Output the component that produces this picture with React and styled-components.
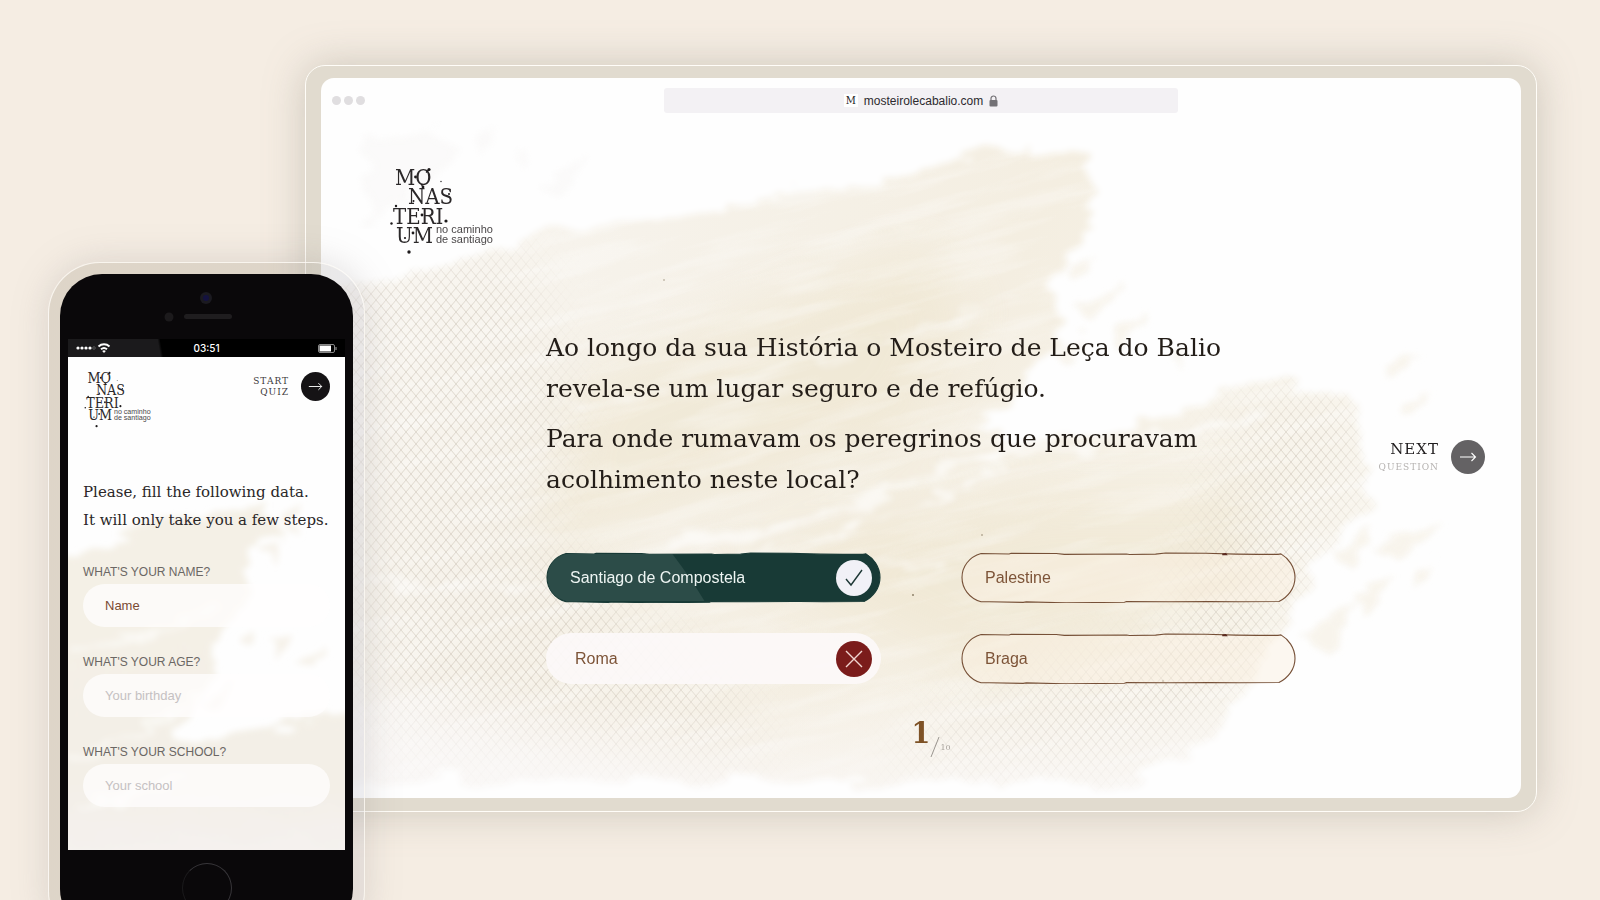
import React from "react";
import styled, { createGlobalStyle, css } from "styled-components";

const slab = `"DejaVu Serif", serif`;
const slabNarrow = `"DejaVu Serif Condensed", "DejaVu Serif", serif`;
const sans = `"Liberation Sans", Arial, sans-serif`;

const answers = [
  { label: "Santiago de Compostela", state: "right" },
  { label: "Palestine", state: "idle" },
  { label: "Roma", state: "wrong" },
  { label: "Braga", state: "idle" },
];

const fields = [
  { id: "name", label: "WHAT'S YOUR NAME?", value: "Name" },
  { id: "age", label: "WHAT'S YOUR AGE?", placeholder: "Your birthday" },
  { id: "school", label: "WHAT'S YOUR SCHOOL?", placeholder: "Your school" },
];

const Logo = ({ width }) => (
  <LogoSvg viewBox="0 0 110 90" $width={width} role="img" aria-label="Monasterium">
    <g fontFamily="DejaVu Serif Condensed, DejaVu Serif, serif" fontSize="22" fill="#2b2829">
      <text x="7" y="20">MO</text>
      <text x="20" y="39">NAS</text>
      <text x="5" y="59">TERI</text>
      <text x="8" y="78">UM</text>
    </g>
    <g fontFamily="Liberation Sans, sans-serif" fontSize="11" fill="#4a4748">
      <text x="48" y="68">no caminho</text>
      <text x="48" y="78">de santiago</text>
    </g>
    <g fill="#1d1a1b">
      <circle cx="41" cy="4.500" r="1.6" />
      <path d="M41 4.500l-3 3M33 19l2 3" stroke="#1d1a1b" strokeWidth="1.200" />
      <circle cx="27.500" cy="12" r="1.4" />
      <circle cx="53" cy="16.5" r="0.7" />
      <circle cx="35" cy="22" r="1.4" />
      <circle cx="25.5" cy="36" r="1" />
      <circle cx="61" cy="29" r="1" />
      <circle cx="8" cy="41" r="1.2" />
      <circle cx="3.5" cy="58.5" r="1.2" />
      <circle cx="34" cy="50" r="1.4" />
      <circle cx="58" cy="56" r="1.6" />
      <circle cx="25" cy="68" r="1.4" />
      <circle cx="17" cy="73" r="1.1" />
      <circle cx="21" cy="87" r="1.7" />
    </g>
  </LogoSvg>
);

const Arrow = ({ size }) => (
  <svg width={size} height={size} viewBox="0 0 18 18" fill="none" stroke="#fff" strokeWidth="1.1">
    <path d="M1 9h15.500M12.500 5l4 4-4 4" />
  </svg>
);

/* Brush stroke with the net texture behind the quiz */
const DesktopPaint = () => (
  <Paint viewBox="0 0 1200 720" preserveAspectRatio="xMidYMid slice" aria-hidden="true">
    <defs>
      <pattern id="net" width="10" height="12" patternUnits="userSpaceOnUse">
        <path d="M0 0l10 12M10 0L0 12" stroke="#bfb6a6" strokeWidth="0.9" />
      </pattern>
      <filter id="rough" x="-5%" y="-5%" width="110%" height="110%">
        <feTurbulence type="fractalNoise" baseFrequency="0.02 0.05" numOctaves="4" seed="4" />
        <feDisplacementMap in="SourceGraphic" scale="34" xChannelSelector="R" yChannelSelector="G" />
        <feGaussianBlur stdDeviation="3" />
      </filter>
      <filter id="grain" x="0" y="0" width="100%" height="100%">
        <feTurbulence type="fractalNoise" baseFrequency="0.008 0.06" numOctaves="4" seed="9" />
        <feColorMatrix values="0 0 0 0 1  0 0 0 0 1  0 0 0 0 1  0 3 0 0 -1.3" />
      </filter>
      <filter id="soft" x="-20%" y="-20%" width="140%" height="140%">
        <feGaussianBlur stdDeviation="26" />
      </filter>
      <linearGradient id="wash" x1="0" y1="0" x2="1" y2="0.3">
        <stop offset="0" stopColor="#fbf9f6" />
        <stop offset="0.3" stopColor="#f6f2ea" />
        <stop offset="0.6" stopColor="#f4eee1" />
        <stop offset="1" stopColor="#f9f6ef" />
      </linearGradient>
      <linearGradient id="floor" x1="0" y1="0" x2="0" y2="1">
        <stop offset="0" stopColor="#fbf9f9" stopOpacity="0" />
        <stop offset="1" stopColor="#fbf9f9" stopOpacity="0.7" />
      </linearGradient>
      <mask id="brush">
        <path
          filter="url(#rough)"
          fill="#fff"
          d="M20 215L218 160 322 146 425 124 537 104 617 84 696 70 772 70 764 110 778 146 730 193 742 250 700 310 650 356 700 366 824 346 943 300 1031 316 1050 424 996 478 980 527 920 615 890 664 800 704H0V215z"
        />
      </mask>
      <mask id="netArea">
        <g filter="url(#soft)" fill="#fff">
          <path d="M30 190L200 180 240 330 210 460 420 620 440 700H60z" />
          <path d="M920 320h120v100l-60 80-80 130-100 70H560l60-60 240-80z" />
        </g>
      </mask>
    </defs>
    <g mask="url(#brush)">
      <rect width="1200" height="720" fill="url(#wash)" />
      <g filter="url(#soft)" fill="#ece2c8" opacity="0.45">
        <path d="M260 300L600 170l50 60-60 120-380 130z" />
        <path d="M420 480l300-70 220 0-20 130-260 60z" />
      </g>
      <g transform="rotate(-14 600 360)">
        <rect x="-100" y="-150" width="1400" height="1000" filter="url(#grain)" opacity="0.28" />
      </g>
      <g mask="url(#netArea)">
        <rect width="1200" height="720" fill="url(#net)" opacity="0.5" />
      </g>
      <g filter="url(#rough)" fill="none" stroke="#fff" strokeLinecap="round">
        <path d="M330 470q180-20 370-110" strokeWidth="8" opacity="0.6" />
        <path d="M360 490q170-24 330-104" strokeWidth="3" opacity="0.8" />
        <path d="M240 330q220-30 460-110" strokeWidth="4" opacity="0.4" />
        <path d="M30 500q300 30 620-20" strokeWidth="5" opacity="0.5" />
        <path d="M660 375q170-4 280-40" strokeWidth="6" opacity="0.6" />
      </g>
      <path d="M0 600L300 680 560 740H0z" fill="#fbf9f9" filter="url(#soft)" opacity="0.6" />
      <rect y="600" width="1200" height="120" fill="url(#floor)" />
    </g>
    <g filter="url(#rough)" fill="#f6f1e6" opacity="0.75">
      <path d="M740 190l34-12-20 26zM750 226l50-24-26 40zM790 250l40-14-34 34zM730 270l34-12-18 30zM850 280l24-8-18 20z" />
      <path d="M1060 290l40-14-30 28zM1080 326l30-10-20 22zM1010 470l44-22-20 38zM1060 470l60-26-40 40zM1030 520l40-24-20 40zM1090 500l24-14-14 26zM980 560l50-36-20 50z" />
    </g>
    <g filter="url(#rough)" fill="#f8f6f5" opacity="0.45">
      <path d="M40 60l70-14 30 40-90 60zM150 60l24-14-16 34zM190 80l26-10-20 26zM224 104l40-24-24 36z" />
    </g>
    <g fill="#8d8069">
      <circle cx="592" cy="517" r="1" />
      <circle cx="661" cy="457" r="0.8" />
      <circle cx="343" cy="202" r="0.7" />
      <circle cx="842" cy="603" r="1.2" opacity="0.5" />
    </g>
  </Paint>
);

const PhonePaint = () => (
  <Paint viewBox="0 0 277 493" preserveAspectRatio="xMidYMid slice" aria-hidden="true">
    <defs>
      <linearGradient id="fade" x1="0" y1="0" x2="0" y2="1">
        <stop offset="0.3" stopColor="#f4f0e6" />
        <stop offset="0.75" stopColor="#f3efe7" />
        <stop offset="1" stopColor="#f5f2f1" />
      </linearGradient>
    </defs>
    <g filter="url(#rough)">
      <path
        fill="url(#fade)"
        d="M-20 205L60 178 110 156 190 150 210 170 180 200 186 226 160 262 144 300 150 320 120 352 106 386 170 380 290 344V520H-20z"
      />
      <path fill="#f6f2ea" d="M196 190l24-10-14 24zM168 280l20-8-10 22zM200 286l24-14-12 30zM232 300l28-8-14 20zM132 348l34-22-18 30zM216 166l16-8-6 18z" />
      <path d="M0 400q60-10 130-60M0 290q80-6 150-40M10 450q60-10 100-30" stroke="#fff" strokeWidth="5" fill="none" opacity="0.6" />
    </g>
  </Paint>
);

const PillOutline = ({ filled }) => (
  <Outline viewBox="0 0 334 52" preserveAspectRatio="none" aria-hidden="true">
    <path
      d="M20 1.500l28 0.500 2-0.800 45 0.400 8 0.800 62-0.400 3 0.600 26-0.400 10-1.200 40 0.300 30 0.900 22 0.200 20 0 3-0.500C326 6 333 15 333 26S326 46 317 50.500l-40 0.300-30-0.400-40 0.400-42-0.400-2 0.800-58 0.600-40-0.900-3 0.500-34-0.600H20C8 47 1 37 1 26S8 5 20 1.500z"
      fill={filled ? "#183a36" : "#fbf0e0"}
      fillOpacity={filled ? 1 : 0.45}
      stroke={filled ? "#183a36" : "#765037"}
      strokeWidth="1.1"
      vectorEffect="non-scaling-stroke"
    />
    {filled ? (
      <path d="M20 2H126q18 24 32 48H20C8 47 1.500 37 1.500 26S8 5 20 2z" fill="#2c4c48" />
    ) : (
      <path d="M261 2l3-0.500 1 1.300-4 0z" fill="#5b2a20" stroke="#5b2a20" />
    )}
  </Outline>
);

const Answer = ({ label, state }) => (
  <AnswerButton type="button" $state={state}>
    {state !== "wrong" && <PillOutline filled={state === "right"} />}
    <span>{label}</span>
    {state !== "idle" && (
      <Mark $state={state}>
        {state === "right" ? (
          <svg width="20" height="20" viewBox="0 0 20 20" fill="none" stroke="#1d3735" strokeWidth="1.400">
            <path d="M2 11l5 6L18 2" />
          </svg>
        ) : (
          <svg width="20" height="20" viewBox="0 0 20 20" fill="none" stroke="#f0d5d0" strokeWidth="1.400">
            <path d="M2 2l16 16M18 2L2 18" />
          </svg>
        )}
      </Mark>
    )}
  </AnswerButton>
);

const Browser = () => (
  <BrowserFrame>
    <BrowserWindow>
      <DesktopPaint />
      <Chrome>
        <Dots>
          <Dot />
          <Dot />
          <Dot />
        </Dots>
        <Address>
          <Favicon>M</Favicon>
          mosteirolecabalio.com
          <svg width="9" height="12" viewBox="0 0 9 12">
            <path d="M2 5V3.500a2.500 2.500 0 0 1 5 0V5" fill="none" stroke="#737175" strokeWidth="1.200" />
            <rect x="0.500" y="5" width="8" height="6.500" rx="1" fill="#737175" />
          </svg>
        </Address>
      </Chrome>
      <Quiz>
        <QuizLogo>
          <Logo width={110} />
        </QuizLogo>
        <Question>
          <p>Ao longo da sua História o Mosteiro de Leça do Balio revela-se um lugar seguro e de refúgio.</p>
          <p>Para onde rumavam os peregrinos que procuravam acolhimento neste local?</p>
        </Question>
        <Answers>
          {answers.map((a) => (
            <Answer key={a.label} {...a} />
          ))}
        </Answers>
        <Counter>
          <Current>1</Current>
          <Total>
            <svg width="10" height="22" viewBox="0 0 10 22">
              <path d="M9 1L1 21" stroke="#8f8a84" strokeWidth="0.900" />
            </svg>
            10
          </Total>
        </Counter>
        <Next type="button">
          <NextText>
            <NextMain>NEXT</NextMain>
            <NextSub>QUESTION</NextSub>
          </NextText>
          <Round $size={34} $color="#646264">
            <Arrow size={18} />
          </Round>
        </Next>
      </Quiz>
    </BrowserWindow>
  </BrowserFrame>
);

const Phone = () => (
  <PhoneFrame>
    <PhoneBody>
      <Earpiece viewBox="0 0 277 65" aria-hidden="true">
        <circle cx="138" cy="24" r="6" fill="#1b1a20" />
        <circle cx="138" cy="24" r="3" fill="#14123f" />
        <circle cx="101" cy="43" r="4.500" fill="#1c1a1c" />
        <rect x="116" y="40" width="48" height="5" rx="2.500" fill="#1f1d1f" />
      </Earpiece>
      <StatusBar>
        <svg width="36" height="12" viewBox="0 0 36 12" fill="#fff">
          <circle cx="2" cy="6" r="1.600" />
          <circle cx="6" cy="6" r="1.600" />
          <circle cx="10" cy="6" r="1.600" />
          <circle cx="14" cy="6" r="1.600" />
          <circle cx="18" cy="6" r="1.300" fill="none" stroke="#777" strokeWidth="0.600" />
          <g fill="none" stroke="#fff" strokeWidth="1.900">
            <path d="M22.500 4.500a8 8 0 0 1 11 0" />
            <path d="M25 7.200a4.600 4.600 0 0 1 6 0" />
          </g>
          <path d="M28 11l-1.800-2a2.600 2.600 0 0 1 3.600 0z" />
        </svg>
        <span>03:51</span>
        <Battery viewBox="0 0 19 9">
          <rect x="0.500" y="0.500" width="16" height="8" rx="1.500" fill="none" stroke="#aaa" strokeWidth="0.800" />
          <rect x="1.500" y="1.500" width="11.500" height="6" fill="#fff" />
          <path d="M18 3v3" stroke="#aaa" />
        </Battery>
      </StatusBar>
      <Screen>
        <PhonePaint />
        <PhoneHeader>
          <Logo width={71} />
          <Start type="button">
            <StartText>
              START
              <br />
              QUIZ
            </StartText>
            <Round $size={29} $color="#151315">
              <Arrow size={15} />
            </Round>
          </Start>
        </PhoneHeader>
        <Intro>
          Please, fill the following data.
          <br />
          It will only take you a few steps.
        </Intro>
        {fields.map((f) => (
          <Field key={f.id}>
            <label htmlFor={f.id}>{f.label}</label>
            <input id={f.id} type="text" defaultValue={f.value} placeholder={f.placeholder} />
          </Field>
        ))}
      </Screen>
      <HomeButton type="button" aria-label="Home" />
    </PhoneBody>
  </PhoneFrame>
);

export default function App() {
  return (
    <Stage>
      <GlobalStyle />
      <Browser />
      <Phone />
    </Stage>
  );
}

const GlobalStyle = createGlobalStyle`
  *, *::before, *::after {
    box-sizing: border-box;
  }
  body {
    margin: 0;
    background: #f5ede3;
    font-family: ${sans};
  }
  button {
    padding: 0;
    border: 0;
    background: none;
    font: inherit;
    cursor: pointer;
  }
`;

const Stage = styled.main`
  position: relative;
  display: flex;
  min-height: 100vh;
  padding: 65px 63px 88px 305px;
  overflow: hidden;
`;

const Paint = styled.svg`
  position: absolute;
  inset: 0;
  width: 100%;
  height: 100%;
  z-index: -1;
`;

const LogoSvg = styled.svg`
  display: block;
  width: ${({ $width }) => $width}px;
`;

// Browser
const BrowserFrame = styled.section`
  display: flex;
  flex: 1;
  padding: 12px 15px 13px;
  border: 1px solid #fffdf8;
  border-radius: 20px;
  background: #e1dbcf;
  box-shadow: 0 0 40px rgba(140, 134, 120, 0.38);
`;

const BrowserWindow = styled.div`
  position: relative;
  isolation: isolate;
  display: flex;
  flex: 1;
  flex-direction: column;
  border-radius: 13px;
  background: #fefefe;
  overflow: hidden;
`;

const Chrome = styled.header`
  display: grid;
  grid-template-columns: 2fr 3fr 2fr;
  align-items: center;
  height: 45px;
`;

const Dots = styled.div`
  display: flex;
  gap: 3px;
  padding-left: 11px;
`;

const Dot = styled.span`
  width: 9px;
  height: 9px;
  border-radius: 50%;
  background: #e0dee0;
`;

const Address = styled.div`
  display: flex;
  justify-content: center;
  align-items: center;
  gap: 6px;
  height: 25px;
  border-radius: 3px;
  background: #f3f1f4;
  color: #2c2a2e;
  font-size: 12px;
`;

const Favicon = styled.span`
  padding: 0 2px;
  background: #fff;
  color: #222;
  font-family: ${slabNarrow};
  font-size: 11px;
`;

const Quiz = styled.div`
  display: grid;
  flex: 1;
  grid-template-columns: 1fr minmax(0, 750px) 1fr;
  grid-template-rows: auto auto auto 1fr;
  padding: 42px 0 36px;
`;

const QuizLogo = styled.div`
  grid-column: 1;
  grid-row: 1;
  padding-left: 67px;
`;

const Question = styled.div`
  grid-column: 2;
  grid-row: 2;
  padding-top: 72px;
  color: #231d18;
  font-family: ${slab};
  font-size: 25px;
  line-height: 41px;

  p {
    margin: 0 0 9px;
  }
`;

const Answers = styled.div`
  display: grid;
  grid-column: 2;
  grid-row: 3;
  grid-template-columns: 1fr 1fr;
  gap: 30px 80px;
  margin-top: 43px;
`;

const AnswerButton = styled.button`
  position: relative;
  isolation: isolate;
  display: flex;
  justify-content: space-between;
  align-items: center;
  height: 51px;
  padding: 0 9px 0 24px;
  color: #7d5438;
  font-size: 16px;

  ${({ $state }) =>
    $state === "right" &&
    css`
      color: #eef5f3;
    `}

  ${({ $state }) =>
    $state === "wrong" &&
    css`
      padding-left: 29px;
      border-radius: 26px;
      background: rgba(252, 249, 248, 0.92);
    `}
`;

const Outline = styled.svg`
  position: absolute;
  inset: 0;
  width: 100%;
  height: 100%;
  z-index: -1;
`;

const Mark = styled.span`
  display: flex;
  justify-content: center;
  align-items: center;
  width: 36px;
  height: 36px;
  border-radius: 50%;
  background: ${({ $state }) => ($state === "right" ? "#f1f1f7" : "#7b1c1b")};
`;

const Counter = styled.div`
  display: grid;
  grid-column: 2;
  grid-row: 4;
  grid-template-columns: 1fr auto 1fr;
  align-items: start;
  padding-top: 34px;
`;

const Current = styled.strong`
  grid-column: 2;
  color: #7e5226;
  font-family: ${slabNarrow};
  font-size: 30px;
  line-height: 30px;
`;

const Total = styled.span`
  display: flex;
  align-items: center;
  padding-top: 18px;
  color: #a9a49e;
  font-family: ${slab};
  font-size: 8px;
`;

const Next = styled.button`
  display: flex;
  grid-column: 3;
  grid-row: 1 / -1;
  align-self: center;
  justify-self: end;
  align-items: center;
  gap: 12px;
  margin: 0 36px 14px 0;
`;

const NextText = styled.span`
  display: flex;
  flex-direction: column;
  align-items: flex-end;
  font-family: ${slab};
`;

const NextMain = styled.span`
  color: #1f1c1d;
  font-size: 15px;
  line-height: 20px;
  letter-spacing: 1px;
`;

const NextSub = styled.span`
  color: #b5b2b0;
  font-family: ${slabNarrow};
  font-size: 10px;
  line-height: 16px;
  letter-spacing: 1px;
`;

const Round = styled.span`
  display: flex;
  justify-content: center;
  align-items: center;
  width: ${({ $size }) => $size}px;
  height: ${({ $size }) => $size}px;
  border-radius: 50%;
  background: ${({ $color }) => $color};
`;

// Phone, lies over the browser's lower left corner
const PhoneFrame = styled.section`
  position: absolute;
  top: 262px;
  left: 48px;
  width: 317px;
  padding: 11px;
  border: 1px solid rgba(255, 253, 248, 0.8);
  border-radius: 52px;
  background: linear-gradient(90deg, rgba(150, 138, 118, 0.24) 70%, rgba(165, 165, 180, 0.2));
  box-shadow: 0 0 36px rgba(140, 132, 130, 0.26);
`;

const PhoneBody = styled.div`
  display: flex;
  flex-direction: column;
  padding: 0 8px 18px;
  border-radius: 42px;
  background: #0a080a;
`;

const Earpiece = styled.svg`
  display: block;
  width: 100%;
`;

const StatusBar = styled.div`
  display: grid;
  grid-template-columns: 1fr auto 1fr;
  align-items: center;
  height: 18px;
  padding: 0 8px;
  background: linear-gradient(80deg, #1b1a1c 33%, #000 34%);
  color: #fff;
  font-family: Inter, sans-serif;
  font-size: 10px;
  font-weight: 500;
`;

const Battery = styled.svg`
  justify-self: end;
  width: 19px;
`;

const Screen = styled.div`
  position: relative;
  isolation: isolate;
  padding: 13px 15px 43px;
  background: #fefefe;
  overflow: hidden;
`;

const PhoneHeader = styled.header`
  display: flex;
  justify-content: space-between;
  align-items: flex-start;
  margin-bottom: 50px;
`;

const Start = styled.button`
  display: flex;
  align-items: center;
  gap: 12px;
  padding-top: 2px;
`;

const StartText = styled.span`
  color: #3c393a;
  font-family: ${slab};
  font-size: 9px;
  line-height: 11px;
  letter-spacing: 1px;
  text-align: right;
`;

const Intro = styled.p`
  margin: 0 0 30px;
  color: #2a2728;
  font-family: ${slab};
  font-size: 15px;
  line-height: 28px;
  white-space: nowrap;
`;

const Field = styled.div`
  margin-bottom: 27px;

  label {
    display: block;
    margin-bottom: 4px;
    color: #6b6764;
    font-size: 12px;
    line-height: 16px;
  }

  input {
    display: block;
    width: 100%;
    height: 43px;
    padding: 0 22px;
    border: 0;
    border-radius: 22px;
    outline: 0;
    background: rgba(255, 253, 254, 0.75);
    color: #7a4a34;
    font-family: ${sans};
    font-size: 13px;
  }

  input::placeholder {
    color: #c5c1c2;
    opacity: 1;
  }

  &:last-child {
    margin-bottom: 0;
  }
`;

const HomeButton = styled.button`
  align-self: center;
  width: 50px;
  height: 50px;
  margin-top: 13px;
  border: 1px solid #38363a;
  border-left-color: #1b1a1c;
  border-radius: 50%;
`;
